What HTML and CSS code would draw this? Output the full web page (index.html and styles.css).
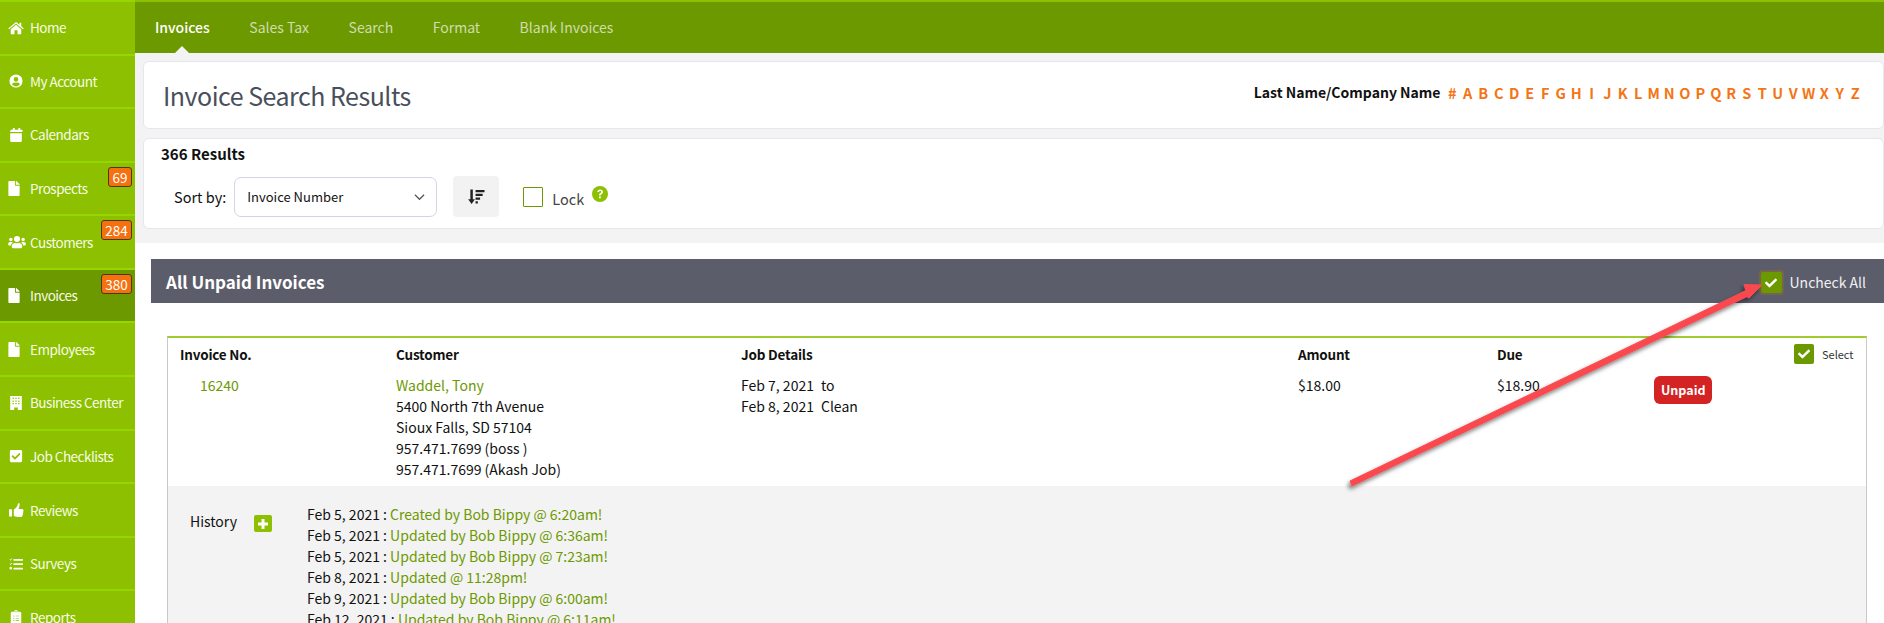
FILE: index.html
```html
<!DOCTYPE html>
<html lang="en">
<head>
<meta charset="utf-8">
<title>Invoice Search Results</title>
<link rel="stylesheet" href="styles.css">
</head>
<body>
<div class="app">
  <nav class="sidebar">
    <a class="nav-item nav-home"><svg class="nav-icon" viewBox="0 0 576 512"><path d="M288 32 4 270l30 36 254-212 254 212 30-36-92-77V64h-64v76zM96 300v180h136V340h112v140h136V300L288 140z"/></svg><span>Home</span></a>
    <a class="nav-item"><svg class="nav-icon" viewBox="0 0 512 512"><path d="M256 16a240 240 0 1 0 0 480 240 240 0 0 0 0-480zm0 96a84 84 0 1 1 0 168 84 84 0 0 1 0-168zm0 336c-56 0-106-26-140-66 10-44 50-70 92-70 16 0 28 8 48 8s32-8 48-8c42 0 82 26 92 70-34 40-84 66-140 66z"/></svg><span>My Account</span></a>
    <a class="nav-item"><svg class="nav-icon" viewBox="0 0 448 512"><path d="M12 192h424v272c0 26-22 48-48 48H60c-26 0-48-22-48-48zM436 144H12V112c0-26 22-48 48-48h48V16c0-9 7-16 16-16h40c9 0 16 7 16 16v48h128V16c0-9 7-16 16-16h40c9 0 16 7 16 16v48h48c26 0 48 22 48 48z"/></svg><span>Calendars</span></a>
    <a class="nav-item"><svg class="nav-icon nav-file" viewBox="0 0 384 512"><path d="M224 136V0H24C10.700 0 0 10.700 0 24v464c0 13.300 10.700 24 24 24h336c13.300 0 24-10.700 24-24V160H248c-13.200 0-24-10.800-24-24zm160-14.100v6.100H256V0h6.100c6.400 0 12.500 2.500 17 7l97.900 98c4.500 4.500 7 10.600 7 16.900z"/></svg><span>Prospects</span><b class="badge">69</b></a>
    <a class="nav-item"><svg class="nav-icon nav-users" viewBox="0 0 640 512"><path d="M96 224a64 64 0 1 0 0-128 64 64 0 0 0 0 128zm448 0a64 64 0 1 0 0-128 64 64 0 0 0 0 128zm32 32h-64c-18 0-34 7-45 19 40 22 69 62 75 109h66c18 0 32-14 32-32v-32c0-35-29-64-64-64zm-256 0a112 112 0 1 0 0-224 112 112 0 0 0 0 224zm77 32h-8c-21 10-44 16-69 16s-48-6-69-16h-8c-64 0-115 52-115 115v29c0 26 21 48 48 48h288c26 0 48-22 48-48v-29c0-63-51-115-115-115zM173 275c-11-12-27-19-45-19H64c-35 0-64 29-64 64v32c0 18 14 32 32 32h66c6-47 35-87 75-109z"/></svg><span>Customers</span><b class="badge badge-wide">284</b></a>
    <a class="nav-item is-active"><svg class="nav-icon nav-file" viewBox="0 0 384 512"><path d="M224 136V0H24C10.700 0 0 10.700 0 24v464c0 13.300 10.700 24 24 24h336c13.300 0 24-10.700 24-24V160H248c-13.200 0-24-10.800-24-24zm160-14.100v6.100H256V0h6.100c6.400 0 12.500 2.500 17 7l97.900 98c4.500 4.500 7 10.600 7 16.900z"/></svg><span>Invoices</span><b class="badge badge-wide">380</b></a>
    <a class="nav-item"><svg class="nav-icon nav-file" viewBox="0 0 384 512"><path d="M224 136V0H24C10.700 0 0 10.700 0 24v464c0 13.300 10.700 24 24 24h336c13.300 0 24-10.700 24-24V160H248c-13.200 0-24-10.800-24-24zm160-14.100v6.100H256V0h6.100c6.400 0 12.500 2.500 17 7l97.900 98c4.500 4.500 7 10.600 7 16.900z"/></svg><span>Employees</span></a>
    <a class="nav-item"><svg class="nav-icon" viewBox="0 0 448 512"><path fill-rule="evenodd" d="M12 0h424v512H288v-96H160v96H12zm84 64v48h48V64zm104 0v48h48V64zm104 0v48h48V64zM96 160v48h48v-48zm104 0v48h48v-48zm104 0v48h48v-48zM96 256v48h48v-48zm104 0v48h48v-48zm104 0v48h48v-48z"/></svg><span>Business Center</span></a>
    <a class="nav-item"><svg class="nav-icon" viewBox="0 0 448 512"><path d="M400 480H48c-26.510 0-48-21.490-48-48V80c0-26.510 21.490-48 48-48h352c26.510 0 48 21.490 48 48v352c0 26.510-21.490 48-48 48zm-204.686-98.059l184-184c6.248-6.248 6.248-16.379 0-22.627l-22.627-22.627c-6.248-6.248-16.379-6.249-22.628 0L184 302.745l-70.059-70.059c-6.248-6.248-16.379-6.248-22.628 0L68.686 255.313c-6.248 6.248-6.248 16.379 0 22.627l104 104c6.249 6.250 16.379 6.250 22.628.001z"/></svg><span>Job Checklists</span></a>
    <a class="nav-item"><svg class="nav-icon" viewBox="0 0 512 512"><path d="M16 224h80c9 0 16 7 16 16v240c0 9-7 16-16 16H16c-9 0-16-7-16-16V240c0-9 7-16 16-16zM384 20c0-10-30-20-50-4-24 18-12 76-40 112-30 38-66 66-102 96-12 8-16 16-16 28v206c0 12 10 24 24 24 40 10 90 30 180 30h54c44 0 66-30 60-68 16-16 24-40 14-64 16-18 20-44 8-66 34-34 14-96-36-96H352c8-50 48-140 32-198z"/></svg><span>Reviews</span></a>
    <a class="nav-item"><svg class="nav-icon" viewBox="0 0 512 512"><path d="M176 72h320c9 0 16 7 16 16v32c0 9-7 16-16 16H176c-9 0-16-7-16-16V88c0-9 7-16 16-16zm0 160h320c9 0 16 7 16 16v32c0 9-7 16-16 16H176c-9 0-16-7-16-16v-32c0-9 7-16 16-16zm0 160h320c9 0 16 7 16 16v32c0 9-7 16-16 16H176c-9 0-16-7-16-16v-32c0-9 7-16 16-16zM20 88l14-14 24 24 50-56 16 14-66 78zm0 160 14-14 24 24 50-56 16 14-66 78zM64 360a48 48 0 1 1 0 96 48 48 0 0 1 0-96z"/></svg><span>Surveys</span></a>
    <a class="nav-item"><svg class="nav-icon" viewBox="0 0 384 512"><path fill-rule="evenodd" d="M48 64h80a64 64 0 0 1 128 0h80c26 0 48 22 48 48v352c0 26-22 48-48 48H48c-26 0-48-22-48-48V112c0-26 22-48 48-48zm144-24a24 24 0 1 0 0 48 24 24 0 0 0 0-48zM112 200a20 20 0 1 0 0 40 20 20 0 0 0 0-40zm64 8v24h128v-24zm-64 72a20 20 0 1 0 0 40 20 20 0 0 0 0-40zm64 8v24h128v-24zm-64 72a20 20 0 1 0 0 40 20 20 0 0 0 0-40zm64 8v24h128v-24z"/></svg><span>Reports</span></a>
  </nav>

  <div class="main">
    <header class="tabs">
      <a class="tab is-current">Invoices</a>
      <a class="tab">Sales Tax</a>
      <a class="tab">Search</a>
      <a class="tab">Format</a>
      <a class="tab">Blank Invoices</a>
    </header>

    <section class="filters">
      <div class="card title-card">
        <h1>Invoice Search Results</h1>
        <div class="alpha">
          <strong>Last Name/Company Name</strong>
          <a>#</a><a>A</a><a>B</a><a>C</a><a>D</a><a>E</a><a>F</a><a>G</a><a>H</a><a>I</a><a>J</a><a>K</a><a>L</a><a>M</a><a>N</a><a>O</a><a>P</a><a>Q</a><a>R</a><a>S</a><a>T</a><a>U</a><a>V</a><a>W</a><a>X</a><a>Y</a><a>Z</a>
        </div>
      </div>
      <div class="card sort-card">
        <div class="count">366 Results</div>
        <div class="sort-row">
          <span class="sort-label">Sort by:</span>
          <div class="select"><span>Invoice Number</span><svg class="chevron" viewBox="0 0 12 8"><path d="M1 1.500 6 6.500 11 1.500" fill="none" stroke="#555" stroke-width="1.300"/></svg></div>
          <div class="sort-btn"><svg viewBox="0 0 18 16"><path d="M2.500 0h2.600v10.500h2.300l-3.600 5-3.600-5h2.300z"/><path d="M8 .5h9.500v2.400H8zM8 4.500h7.500v2.400H8zM8 8.500h4.800v2.400H8zM8 12.500h2.400v2.400H8z"/></svg></div>
          <span class="checkbox"></span>
          <span class="lock">Lock</span>
          <svg class="help" viewBox="0 0 16 16"><circle cx="8" cy="8" r="8" fill="#8cc000"/><path d="M5.300 6.100C5.500 4.500 6.600 3.500 8.200 3.500c1.600 0 2.800 1 2.800 2.400 0 1.100-.6 1.700-1.500 2.300-.6.400-.8.600-.8 1.200H7c0-1.200.4-1.800 1.200-2.300.7-.5 1-.7 1-1.200 0-.5-.4-.9-1-.9-.7 0-1 .4-1.100 1.100zM7 10.400h1.800v1.900H7z" fill="#fff"/></svg>
        </div>
      </div>
    </section>

    <section class="results">
      <div class="results-bar">
        <h2>All Unpaid Invoices</h2>
        <div class="uncheck">
          <span class="tick tick-halo"><svg viewBox="0 0 512 512"><path d="M173.898 439.404l-166.400-166.400c-9.997-9.997-9.997-26.206 0-36.204l36.203-36.204c9.997-9.998 26.207-9.998 36.204 0L192 312.690 432.095 72.596c9.997-9.997 26.207-9.997 36.204 0l36.203 36.204c9.997 9.997 9.997 26.206 0 36.204l-294.400 294.401c-9.998 9.997-26.207 9.997-36.204-.001z"/></svg></span>
          <span>Uncheck All</span>
        </div>
      </div>

      <article class="invoice">
        <div class="invoice-grid">
          <div class="col-no">
            <div class="th">Invoice No.</div>
            <a class="link no-value">16240</a>
          </div>
          <div class="col-customer">
            <div class="th">Customer</div>
            <a class="link">Waddel, Tony</a>
            <div>5400 North 7th Avenue</div>
            <div>Sioux Falls, SD 57104</div>
            <div>957.471.7699 (boss )</div>
            <div>957.471.7699 (Akash Job)</div>
          </div>
          <div class="col-job">
            <div class="th">Job Details</div>
            <div class="job-line"><span>Feb 7, 2021</span><span>to</span></div>
            <div class="job-line"><span>Feb 8, 2021</span><span>Clean</span></div>
          </div>
          <div class="col-amount">
            <div class="th">Amount</div>
            <div>$18.00</div>
          </div>
          <div class="col-due">
            <div class="th">Due</div>
            <div>$18.90</div>
          </div>
          <div class="col-status"><span class="status">Unpaid</span></div>
          <div class="col-select">
            <span class="tick tick-select"><svg viewBox="0 0 512 512"><path d="M173.898 439.404l-166.400-166.400c-9.997-9.997-9.997-26.206 0-36.204l36.203-36.204c9.997-9.998 26.207-9.998 36.204 0L192 312.690 432.095 72.596c9.997-9.997 26.207-9.997 36.204 0l36.203 36.204c9.997 9.997 9.997 26.206 0 36.204l-294.400 294.401c-9.998 9.997-26.207 9.997-36.204-.001z"/></svg></span>
            <span class="select-label">Select</span>
          </div>
        </div>
        <div class="history">
          <div class="history-label"><span>History</span><span class="plus"><svg viewBox="0 0 12 12"><path d="M4.500 1h3v3.500H11v3H7.500V11h-3V7.500H1v-3h3.500z"/></svg></span></div>
          <ul class="history-list">
            <li>Feb 5, 2021 : <a class="link">Created by Bob Bippy @ 6:20am!</a></li>
            <li>Feb 5, 2021 : <a class="link">Updated by Bob Bippy @ 6:36am!</a></li>
            <li>Feb 5, 2021 : <a class="link">Updated by Bob Bippy @ 7:23am!</a></li>
            <li>Feb 8, 2021 : <a class="link">Updated @ 11:28pm!</a></li>
            <li>Feb 9, 2021 : <a class="link">Updated by Bob Bippy @ 6:00am!</a></li>
            <li>Feb 12, 2021 : <a class="link">Updated by Bob Bippy @ 6:11am!</a></li>
          </ul>
        </div>
      </article>
    </section>
  </div>
</div>
<svg class="annotation" viewBox="0 0 1884 623">
  <defs><filter id="arrow-shadow" x="-5%" y="-10%" width="110%" height="120%"><feDropShadow dx="-2" dy="3" stdDeviation="2" flood-color="#000" flood-opacity=".5"/></filter></defs>
  <path filter="url(#arrow-shadow)" fill="#f94a4f" stroke="#f94a4f" stroke-linejoin="round" stroke-width="1" d="M1762 285 1744 284.500 1746 290.500 1350 481 1352 486 1747 296.500 1749 298z"/>
</svg>
</body>
</html>
```
FILE: styles.css
```css
* { box-sizing: border-box; }
html, body { margin: 0; height: 100%; overflow: hidden; }
body {
  position: relative;
  background: #fff;
  color: #111;
  font: 14px/21px "Noto Sans CJK SC", "Source Sans Pro", "Noto Sans", sans-serif;
}
a { color: inherit; text-decoration: none; }
h1, h2, ul { margin: 0; padding: 0; }
ul { list-style: none; }

.app { display: flex; height: 623px; overflow: hidden; }

/* Sidebar */
.sidebar {
  flex: 0 0 135px;
  background: #8cc000;
  border-top: 2px solid #95d600;
  overflow: hidden;
}
.nav-item {
  position: relative;
  display: flex;
  align-items: center;
  height: 53.6px;
  padding: 0 0 0 8px;
  border-bottom: 2px solid #95d600;
  color: #f8fce8;
  font-size: 13.500px;
  letter-spacing: -.5px;
  white-space: nowrap;
}
.nav-home { height: 53.500px; }
.nav-item.is-active { background: #6d9900; }
.nav-icon { flex: 0 0 auto; width: 16px; height: 14px; margin-right: 6px; fill: #fff; }
.nav-file { width: 12px; height: 15px; margin-right: 10px; }
.nav-users { width: 18px; margin-right: 4px; }
.badge {
  position: absolute;
  top: 4px;
  right: 3px;
  width: 24px;
  height: 20px;
  background: #f5700e;
  border: 1px solid #4a3a10;
  border-radius: 3px;
  color: #fff;
  font-size: 13.500px;
  font-weight: 400;
  letter-spacing: 0;
  line-height: 18px;
  text-align: center;
}
.badge-wide { width: 31px; }

/* Main */
.main { flex: 1 1 auto; min-width: 0; display: flex; flex-direction: column; }
.tabs {
  flex: 0 0 53px;
  display: flex;
  align-items: center;
  gap: 39.500px;
  padding: 0 0 0 20px;
  border-top: 2px solid #8cc000;
  background: #6d9900;
}
.tab { position: relative; color: #cfdcb0; font-size: 14px; }
.tab.is-current { color: #fff; font-weight: 500; }
.tab.is-current::after {
  content: "";
  position: absolute;
  left: 50%;
  bottom: -15px;
  margin-left: -7px;
  border: 7px solid transparent;
  border-top: 0;
  border-bottom-color: #f3f3f3;
}

.filters { flex: 0 0 auto; background: #f3f3f3; padding: 8px 0 14px 8px; }
.card { background: #fff; border: 1px solid #e6e6ee; border-radius: 6px; }
.title-card {
  display: flex;
  align-items: center;
  justify-content: space-between;
  height: 68px;
  margin-bottom: 9px;
  padding: 0 20px 0 19px;
}
.title-card h1 { color: #4a4f5c; font-size: 25px; font-weight: 400; letter-spacing: -.5px; line-height: 36px; }
.alpha { display: flex; align-items: center; margin-top: -5px; font-size: 14.500px; }
.alpha strong { margin-right: 4px; color: #111; font-size: 14px; font-weight: 600; }
.alpha a { width: 15.500px; color: #f37516; font-weight: 600; text-align: center; }

.sort-card { height: 91px; padding: 4px 0 0 17px; }
.count { font-size: 15px; font-weight: 600; line-height: 21px; }
.sort-row { display: flex; align-items: center; margin-top: 12px; padding-left: 13px; }
.sort-label { margin-right: 8px; font-size: 14.500px; }
.select {
  display: flex;
  align-items: center;
  justify-content: space-between;
  width: 203px;
  height: 40px;
  padding: 0 11px 0 12px;
  background: #fff;
  border: 1px solid #d4d4e4;
  border-radius: 7px;
  font-size: 13px;
}
.chevron { width: 11px; height: 8px; }
.sort-btn {
  display: flex;
  align-items: center;
  justify-content: center;
  width: 46px;
  height: 41px;
  margin: 0 24px 0 16px;
  background: #f2f2f2;
  border-radius: 4px;
}
.sort-btn svg { width: 17px; height: 16px; fill: #222; }
.checkbox { width: 20px; height: 20px; border: 1px solid #6d9900; background: #fff; border-radius: 1px; }
.lock { margin: 3px 0 0 9px; color: #444; font-size: 14.500px; }
.help { align-self: flex-start; width: 16px; height: 16px; margin: 10px 0 0 8px; }

/* Results */
.results { flex: 1 1 auto; background: #fff; padding: 16px 0 0 16px; }
.results-bar {
  display: flex;
  align-items: center;
  justify-content: space-between;
  height: 44px;
  padding: 0 18px 0 15px;
  background: #5c5d6b;
  color: #fff;
}
.results-bar h2 { font-size: 17px; font-weight: 600; }
.uncheck { display: flex; align-items: center; gap: 8px; margin-top: 3px; font-size: 14px; color: #f0f0f2; }
.tick { display: flex; align-items: center; justify-content: center; background: #6d9900; border-radius: 2px; }
.tick svg { fill: #fff; }
.tick-halo { width: 21px; height: 21px; box-shadow: 0 0 0 2px #75654f; }
.tick-halo svg { width: 12px; height: 12px; }

.invoice {
  margin: 33px 17px 0 16px;
  border-top: 2px solid #a0cc30;
  border-left: 1px solid #c9c9c9;
  border-right: 1px solid #c9c9c9;
}
.invoice-grid {
  display: grid;
  grid-template-columns: 216px 345px 557px 199px 157px 143px 1fr;
  height: 148px;
  padding: 6px 0 0 12px;
  font-size: 14px;
}
.th { margin-bottom: 10px; font-size: 13.500px; font-weight: 600; letter-spacing: -.2px; }
.link { color: #6d9900; }
.no-value { display: block; padding-left: 20px; }
.job-line { display: flex; gap: 7px; }
.status {
  display: inline-block;
  margin-top: 32px;
  padding: 0 7px;
  height: 28px;
  background: #d32323;
  border-radius: 6px;
  color: #fff;
  font-size: 12.500px;
  font-weight: 600;
  line-height: 28px;
}
.col-select { display: flex; align-items: flex-start; gap: 8px; margin-left: -3px; }
.tick-select { width: 20px; height: 20px; border-radius: 2px; }
.tick-select svg { width: 12px; height: 12px; }
.select-label { color: #333; font-size: 11px; line-height: 20px; }

.history {
  display: flex;
  height: 200px;
  padding: 18px 0 0 22px;
  background: #f3f3f3;
}
.history-label { flex: 0 0 117px; display: flex; align-items: flex-start; gap: 17px; padding-top: 7px; font-size: 14px; }
.plus { display: flex; align-items: center; justify-content: center; width: 18px; height: 17px; margin-top: 4px; background: #8cc000; border-radius: 2px; }
.plus svg { width: 12px; height: 12px; fill: #fff; }

/* Annotation arrow drawn over the page */
.annotation { position: absolute; inset: 0; width: 1884px; height: 623px; pointer-events: none; }
```
